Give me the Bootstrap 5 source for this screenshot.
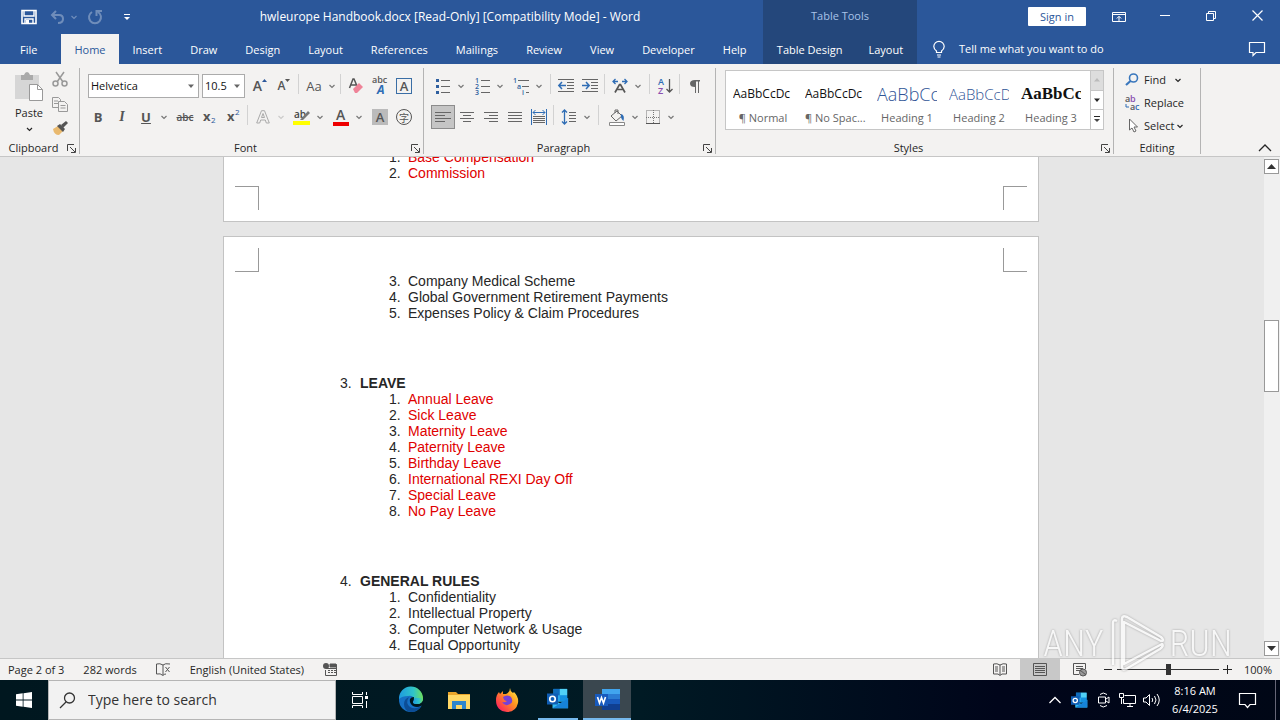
<!DOCTYPE html>
<html lang="en">
<head>
<meta charset="utf-8">
<meta name="viewport" content="width=device-width, initial-scale=1">
<title>hwleurope Handbook.docx - Word</title>
<link href="https://cdn.jsdelivr.net/npm/bootstrap@5.3.0/dist/css/bootstrap.min.css" rel="stylesheet">
<style>
:root{--word:#2b579a;--word-dark:#24477b;--ink:#262626;--line:#c6c6c6}
body{font-family:"Open Sans","Noto Sans",sans-serif;font-size:11px;line-height:16px;color:var(--ink);background:#e6e6e6}
svg{display:block;flex:none;overflow:visible}
svg:not([stroke]){stroke:currentColor}
svg:not([fill]){fill:none}
button,input{font:inherit;color:inherit}
button{background:none;border:0;padding:0}
a{color:inherit;text-decoration:none}
/* title bar and tabs */
.titlebar{background:var(--word);color:#fff;height:64px}
.title-row{height:34px}
.doc-title{font-size:12px;white-space:pre}
.tab-row{height:30px}
.tab-row a{padding:0 14px;height:30px;line-height:31px;white-space:nowrap}
.context .tab-row a{padding:0 13px}
.tab-row a.file{padding:0 24px 0 20px}
.tab-row a.current{background:#f3f2f1;color:var(--word);padding:0 13px}
.main-part{width:763px}
.quick{width:137px;padding-left:20px}
.context{width:154px;background:var(--word-dark)}
.context .title-row{color:#a9c3e8;line-height:32px}
.win{width:46px;height:32px}
.signin{background:#fff;color:var(--word);width:58px;height:19px;border-radius:1px;line-height:19px;margin:0 10px 2px 0}
.tell{padding-left:14px}
.dim{opacity:.32}
/* ribbon */
.ribbon{background:#f3f2f1;height:93px;border-bottom:1px solid var(--line)}
.group{margin:4px 0 2px;border-right:1px solid #b4b4b4}
.tools{padding-top:6px}
.tool-row{height:24px;margin-bottom:7px}
.cap{line-height:12px;height:12px}
.launch{width:12px;height:12px;color:#444}
.paste{width:44px;padding-left:14px!important;padding-top:2px!important}
.t{width:24px;height:24px;display:flex;align-items:center;justify-content:center;color:#555}
.t.on{background:#c5c5c5;outline:1px solid #8c8c8c;outline-offset:-1px}
.c{width:12px;height:24px;display:flex;align-items:center;justify-content:center;color:#777}
.s3{width:3px}
.vs{width:1px;height:20px;background:#d2d2d2;margin:0 3px 0 2px}
.combo{height:24px;border:1px solid #ababab;background:#fff;color:#111}
.combo input{border:0;background:none;padding:0 0 0 2px;width:100%;min-width:0;outline:0}
.combo button{width:14px;flex:none;display:flex;justify-content:center;align-items:center;color:#666}
.g-clip{width:80px}.g-font{width:344px}.g-para{width:292px}.g-style{width:398px}.g-edit{width:87px}
.w-name{width:111px}.w-size{width:43px}
.glyph{font-size:14px;line-height:20px}
.boxed{width:16px;height:16px;font-size:13px}
.gallery{height:60px;width:379px;background:#fff;border:1px solid var(--line);margin-left:9px}
.gallery .item{width:72px;padding:0 5px 0 7px;text-align:center;color:#666}
.gallery .sample{display:block;height:28px;line-height:28px;margin-top:8px;width:60px;overflow:hidden;white-space:nowrap;text-align:left;color:#111;font-size:12px}
.gallery .nm{display:block;white-space:nowrap;line-height:20px}
.gal-scroll{width:13px;border-left:1px solid var(--line)}
.gal-scroll button{flex:1;display:flex;align-items:center;justify-content:center;border-bottom:1px solid var(--line)}
.gal-scroll button:first-child{background:#ddd;color:#bbb}
.gal-scroll button:last-child{border-bottom:0}
.gallery .h1s{font-size:18px;color:#2f5496;font-weight:300}
.gallery .h2s{font-size:15px;color:#2f5496;font-weight:300}
.gallery .h3s{font-family:"Liberation Serif",serif;font-size:17px;font-weight:bold}
.edit-row{height:23px;display:flex;align-items:center;gap:4px;padding-left:11px}
/* document */
.canvas{overflow:hidden;min-height:0}
.page-area{padding-right:2px}
.sheet{width:816px;max-width:100%;margin:0 auto;background:#fff;border:1px solid #c3c3c3;font-family:"Liberation Sans",Arial,sans-serif;font-size:14px}
.sheet ol{list-style:none;margin:0;padding:0}
.sheet li li{display:flex}
.sheet .sub{padding-left:165px}
.num{display:inline-block;width:19px;flex:none}
.head-num{display:inline-block;width:20px}
.first-sheet{margin-top:-9px;padding-bottom:11px}
.marks{display:flex;justify-content:space-between;padding:0 11px}
.marks i{width:24px;height:24px;border:0 solid #999}
.marks.low{margin-top:5px}
.marks.low i{border-top-width:1px}
.marks.high{margin:11px 0 1px}
.marks.high i{border-bottom-width:1px}
.marks i:first-child{border-right-width:1px}
.marks i:last-child{border-left-width:1px}
.second-sheet{margin-top:14px;padding-bottom:200px}
.chapter{margin-top:54px;padding-left:116px}
.sheet .chapter .sub{padding-left:49px}
.redtext{color:#e00000}
.scroll{width:16px;background:#f0f0f0;padding:2px 0 2px}
.scroll button{width:15px;height:15px;background:#fff;border:1px solid #999;display:flex;align-items:center;justify-content:center}
.thumb{width:15px;height:72px;background:#fff;border:1px solid #999;margin-top:146px}
.logo-mark{position:absolute;right:48px;bottom:44px;color:#fff;opacity:.7;font-family:"Roboto Condensed","Liberation Sans Narrow","Roboto",sans-serif;font-weight:300;font-size:36px;line-height:64px;filter:drop-shadow(0 0 1px #888);pointer-events:none;gap:5px}
/* status bar */
.status{height:22px;background:#f3f2f1;border-top:1px solid var(--line);padding-left:8px}
.gap-a{margin-left:19px}
.status .view{width:40px;height:21px;display:flex;align-items:center;justify-content:center;color:#444}
.status .view.on{background:#c8c8c8}
.percent{width:40px;margin-right:8px}
.zoomer{appearance:none;width:102px;height:14px;background:linear-gradient(#333,#333) center/100% 1px no-repeat;margin:0}
.zoomer::-webkit-slider-thumb{appearance:none;width:5px;height:11px;background:#333}
/* taskbar */
.taskbar{height:40px;background:linear-gradient(90deg,#00171f 0,#001a24 50%,#00051a 78%,#000716 100%);color:#fff}
.start{width:48px}
.find{width:288px;height:40px;background:#f2f2f2;border:1px solid #b5b5b5;color:#333;padding:0 10px}
.find input{border:0;background:none;outline:0;font-size:14px;width:100%}
.find input::placeholder{color:#333;opacity:1}
.app{width:48px;height:40px;display:flex;align-items:center;justify-content:center}
.app.first{margin-right:3px}
.app.open{width:40px;margin:0 5px 0 7px;border-bottom:2px solid #76b9ed}
.app.now{background:#3a474f;border-bottom:2px solid #76b9ed}
.tray{width:24px;display:flex;justify-content:center}
.clock{width:64px;line-height:18px;text-align:center;margin-right:8px}
.edge-bar{width:1px;height:40px;background:#667;margin-right:4px}
</style>
</head>
<body class="vh-100 d-flex flex-column overflow-hidden">
<svg width="0" height="0" class="position-absolute" aria-hidden="true">
<symbol id="cv" viewBox="0 0 8 8"><path d="M1.500 3l2.500 2.500L6.500 3" stroke-width="1.200"/></symbol>
<symbol id="tri" viewBox="0 0 8 8"><path d="M1 2.500h6L4 6z" fill="currentColor" stroke="none"/></symbol>
<symbol id="dl" viewBox="0 0 9 9"><path d="M.5 7V.5H7M3 3l5 5M8.500 4v4.500H4"/></symbol>
<symbol id="outlook" viewBox="0 0 24 24"><g stroke="none"><path d="M7 1h15v14H7z" fill="#28a8ea"/><path d="M7 1h7v7H7z" fill="#0f6cbd"/><path d="M14 1h8v7h-8z" fill="#50d0f5"/><path d="M14 8h8v6h-8z" fill="#1490df"/><path d="M6 13l9 4 8-6v11H6z" fill="#32bdf0"/><path d="M6 22l17-11v11z" fill="#1683d8"/><path d="M0 6h12v12H0z" fill="#0f5db4"/></g><circle cx="6" cy="12" r="3" stroke="#fff" stroke-width="1.800"/></symbol>
</svg>

<header class="titlebar d-flex flex-shrink-0">
  <div class="main-part">
    <div class="title-row d-flex align-items-center">
      <div class="quick d-flex align-items-center">
        <button aria-label="Save"><svg width="18" height="16" viewBox="0 0 18 16"><path d="M2 1.500h14v13H2z" stroke-width="1.600"/><path d="M4 2v5h10V2M5 14v-4h8v4" stroke-width="1.400"/><path d="M6 11h3v3H6z" fill="#fff" stroke="none"/></svg></button>
        <button class="dim ms-2 ps-1" aria-label="Undo"><svg width="15" height="14" viewBox="0 0 15 14" stroke-width="2"><path d="M6 1L2 5l4 4M2 5h7q4 0 4 4t-5 4"/></svg></button>
        <button class="dim ms-1" aria-label="Undo list"><svg width="10" height="8"><use href="#cv"/></svg></button>
        <button class="dim ms-2" aria-label="Repeat"><svg width="16" height="16" viewBox="0 0 16 16" stroke-width="2"><path d="M5 3a6 6 0 1 0 6 0M9.500 7V2H15"/></svg></button>
        <button class="ms-3 ps-1" aria-label="Customize"><svg width="8" height="8" viewBox="0 0 8 8"><path d="M1 1.500h6"/><path d="M1 4h6L4 7z" fill="#fff" stroke="none"/></svg></button>
      </div>
      <div class="doc-title flex-grow-1 text-center">hwleurope Handbook.docx [Read-Only] [Compatibility Mode] - Word</div>
    </div>
    <nav class="tab-row d-flex">
      <a href="#" class="file">File</a><a href="#" class="current">Home</a><a href="#">Insert</a><a href="#">Draw</a><a href="#">Design</a><a href="#">Layout</a><a href="#">References</a><a href="#">Mailings</a><a href="#">Review</a><a href="#">View</a><a href="#">Developer</a><a href="#">Help</a>
    </nav>
  </div>
  <div class="context">
    <div class="title-row text-center">Table Tools</div>
    <nav class="tab-row d-flex justify-content-center"><a href="#" class="ps-2">Table Design</a><a href="#" class="pe-2">Layout</a></nav>
  </div>
  <div class="flex-grow-1">
    <div class="title-row d-flex justify-content-end align-items-center">
      <button class="signin">Sign in</button>
      <button class="win d-flex justify-content-center align-items-center" aria-label="Ribbon options"><svg width="14" height="12" viewBox="0 0 14 12"><path d="M.5 1.500h13v9H.5zM.5 3.500h13M7 10V5.500M4.800 7.500L7 5.300l2.200 2.200"/></svg></button>
      <button class="win d-flex justify-content-center align-items-center" aria-label="Minimize"><svg width="10" height="10"><path d="M0 3.500h10"/></svg></button>
      <button class="win d-flex justify-content-center align-items-center" aria-label="Restore"><svg width="11" height="13"><path d="M.5 2.500h7v7h-7zM2.500 2.500v-2h7v7h-2"/></svg></button>
      <button class="win d-flex justify-content-center align-items-center" aria-label="Close"><svg width="11" height="14"><path d="M.5.5l10 10M10.500.5l-10 10" stroke-width="1.200"/></svg></button>
    </div>
    <div class="tab-row d-flex align-items-center ps-3">
      <svg width="12" height="17" viewBox="0 0 12 17"><path d="M3.500 11.500V10Q.8 8 .8 5.600a5.200 5.200 0 0 1 10.400 0Q11.200 8 8.500 10v1.500zM4 14h4M4.500 16h3" stroke-width="1.200"/></svg>
      <button class="tell flex-grow-1 text-start">Tell me what you want to do</button>
      <button class="win d-flex justify-content-center align-items-center" aria-label="Comments"><svg width="16" height="15"><path d="M.5.500h15v10H7l-3 3v-3H.5z" stroke-width="1.200"/></svg></button>
    </div>
  </div>
</header>

<section class="ribbon d-flex flex-shrink-0">
  <div class="group g-clip d-flex flex-column">
    <div class="d-flex flex-grow-1">
      <button class="paste d-flex flex-column align-items-center" aria-label="Paste">
        <svg width="28" height="31" viewBox="0 0 28 31"><g stroke="none"><path d="M0 5h24v24H0z" fill="#d6d6d6"/><path d="M6 5h3q1-3 3-3t3 3h3v5H6z" fill="#aaa"/><path d="M14.500 14.500h8l5 5v11h-13z" fill="#fff" stroke="#999"/><path d="M22.500 14.500v5h5" stroke="#999"/></g></svg>
        <span class="mt-1">Paste</span><svg class="mt-1" width="9" height="8"><use href="#cv"/></svg>
      </button>
      <div class="d-flex flex-column ms-1">
        <button class="t" aria-label="Cut"><svg width="16" height="16" stroke="#999" stroke-width="1.500"><path d="M4 0l7 10M12 0L5 10"/><circle cx="3.500" cy="11.500" r="2.500"/><circle cx="12.500" cy="11.500" r="2.500"/></svg></button>
        <button class="t" aria-label="Copy"><svg width="16" height="15" stroke="#999"><path d="M.5.500h6l2 2v8h-8zM2 4h4M2 6.500h4"/><path d="M6.500 4.500h6l3 3v7h-9z" fill="#f3f2f1"/><path d="M8.500 8.500h5M8.500 11h5"/></svg></button>
        <button class="t" aria-label="Format Painter"><svg width="16" height="15" stroke="none"><path d="M1 8l5-3 5 5-4 4q-5 0-6-6z" fill="#e9b96e"/><path d="M5 5l3-2 5 5-2 3z" fill="#555"/><path d="M9 4l5-4 2 2-5 5z" fill="#555"/></svg></button>
      </div>
    </div>
    <div class="cap d-flex"><span class="flex-grow-1 text-center">Clipboard</span><button class="launch" aria-label="Clipboard settings"><svg width="9" height="9"><use href="#dl"/></svg></button></div>
  </div>

  <div class="group g-font d-flex flex-column">
    <div class="tools flex-grow-1">
      <div class="tool-row d-flex ps-2">
        <div class="combo w-name d-flex"><input aria-label="Font" value="Helvetica"><button aria-label="Fonts"><svg width="8" height="8"><use href="#tri"/></svg></button></div><span class="s3"></span>
        <div class="combo w-size d-flex"><input aria-label="Font size" value="10.5"><button aria-label="Sizes"><svg width="8" height="8"><use href="#tri"/></svg></button></div><span class="s3"></span>
        <button class="t fw-semibold" aria-label="Grow font"><span class="glyph">A</span><svg width="5" height="16"><path d="M0 4l2.500-3L5 4z" fill="#2b579a" stroke="none"/></svg></button>
        <button class="t fw-semibold" aria-label="Shrink font"><span style="font-size:12px">A</span><svg width="5" height="16"><path d="M0 1h5L2.500 4z" fill="#555" stroke="none"/></svg></button>
        <span class="vs"></span>
        <button class="t" aria-label="Change case"><span style="font-size:13px">Aa</span></button><button class="c" aria-label="Case list"><svg width="8" height="8"><use href="#cv"/></svg></button>
        <span class="vs"></span>
        <button class="t" aria-label="Clear formatting"><svg width="16" height="16"><path d="M1.500 10l3.500-9h1l3 7M3 7h5" stroke="#555" stroke-width="1.500"/><path d="M5 11l6-6 4 4-6 6H7z" fill="#ef8398" stroke="none"/></svg></button>
        <button class="t flex-column" aria-label="Phonetic guide"><svg width="16" height="18"><g stroke="none"><text x="0" y="6" font-size="9" font-weight="600" fill="#555">abc</text><text x="5" y="17" font-size="12" font-weight="700" font-style="italic" fill="#2f6db5">A</text></g></svg></button>
        <button class="t" aria-label="Character border"><span class="boxed d-flex justify-content-center align-items-center fw-semibold" style="border:1px solid #3a6ea5">A</span></button>
      </div>
      <div class="tool-row d-flex" style="padding-left:6px">
        <button class="t fw-bold" style="font-size:13px">B</button><button class="t" style="font:italic bold 14px 'Liberation Serif',serif">I</button><button class="t fw-bold text-decoration-underline" style="font-size:13px">U</button><button class="c" aria-label="Underline list"><svg width="8" height="8"><use href="#cv"/></svg></button><span class="s3"></span>
        <button class="t text-decoration-line-through fw-semibold" style="font-size:10px">abc</button>
        <button class="t" aria-label="Subscript"><svg width="13" height="16" stroke="none"><text x="0" y="12" font-size="13" font-weight="700" fill="#555">x</text><text x="8" y="14" font-size="8" fill="#2b579a">2</text></svg></button>
        <button class="t" aria-label="Superscript"><svg width="13" height="16" stroke="none"><text x="0" y="12" font-size="13" font-weight="700" fill="#555">x</text><text x="8" y="6" font-size="8" fill="#2b579a">2</text></svg></button>
        <span class="vs"></span>
        <button class="t" aria-label="Text effects"><svg width="14" height="14" stroke="#aaa"><path d="M.7 13L5.500.700h3L13.300 13h-3l-1-3H4.700l-1 3zM5.500 7.500h3L7 3.500z"/></svg></button><button class="c dim" aria-label="Effects list"><svg width="8" height="8"><use href="#cv"/></svg></button><span class="s3"></span>
        <button class="t" aria-label="Highlight"><svg width="18" height="18"><text x="1" y="10" font-size="10" font-weight="600" fill="#444" stroke="none">ab</text><path d="M7 12l8-9 2 2-7 7z" fill="#777" stroke="none"/><path d="M0 13h17v4H0z" fill="#ff0" stroke="none"/></svg></button><button class="c" aria-label="Highlight list"><svg width="8" height="8"><use href="#cv"/></svg></button><span class="s3"></span>
        <button class="t" aria-label="Font color"><svg width="16" height="18"><text x="3" y="12" font-size="14" font-weight="600" fill="#555" stroke="none">A</text><path d="M0 14h16v4H0z" fill="#e00" stroke="none"/></svg></button><button class="c" aria-label="Color list"><svg width="8" height="8"><use href="#cv"/></svg></button><span class="s3"></span>
        <button class="t" aria-label="Shading"><span class="boxed d-flex justify-content-center align-items-center fw-semibold" style="background:#bbb">A</span></button>
        <button class="t" aria-label="Enclose character"><span class="boxed d-flex justify-content-center align-items-center rounded-circle" style="border:1px solid #555;font:10px 'Noto Sans CJK SC',sans-serif">字</span></button>
      </div>
    </div>
    <div class="cap d-flex"><span class="flex-grow-1 text-center">Font</span><button class="launch" aria-label="Font settings"><svg width="9" height="9"><use href="#dl"/></svg></button></div>
  </div>

  <div class="group g-para d-flex flex-column">
    <div class="tools flex-grow-1">
      <div class="tool-row d-flex" style="padding-left:7px">
        <button class="t" aria-label="Bullets"><svg width="14" height="16"><path d="M5 2.500h9M5 8.500h9M5 14.500h9" stroke="#666"/><path d="M0 1h3v3H0zM0 7h3v3H0zM0 13h3v3H0z" fill="#2f5f9f" stroke="none"/></svg></button><button class="c" aria-label="Bullet list"><svg width="8" height="8"><use href="#cv"/></svg></button><span class="s3"></span>
        <button class="t" aria-label="Numbering"><svg width="15" height="17"><path d="M6 2.500h9M6 8.500h9M6 14.500h9" stroke="#666"/><g fill="#2f5f9f" stroke="none" font-size="7" font-weight="600"><text y="5">1</text><text y="11">2</text><text y="17">3</text></g></svg></button><button class="c" aria-label="Number list"><svg width="8" height="8"><use href="#cv"/></svg></button><span class="s3"></span>
        <button class="t" aria-label="Multilevel list"><svg width="17" height="17"><path d="M5 2.500h11M9 8.500h7M13 14.500h3" stroke="#666"/><g fill="#2f5f9f" stroke="none" font-size="7" font-weight="600"><text y="5">1</text><text x="4" y="11">a</text><text x="9" y="17">i</text></g></svg></button><button class="c" aria-label="Level list"><svg width="8" height="8"><use href="#cv"/></svg></button><span class="s3"></span>
        <span class="vs"></span>
        <button class="t" aria-label="Decrease indent"><svg width="16" height="14"><path d="M0 .5h16M9 3.500h7M9 6.500h7M9 9.500h7M0 12.500h16" stroke="#666"/><path d="M8 6.500H1M4 3L.8 6.500 4 10" stroke="#2f6db5" stroke-width="1.500"/></svg></button>
        <button class="t" aria-label="Increase indent"><svg width="16" height="14"><path d="M0 .5h16M9 3.500h7M9 6.500h7M9 9.500h7M0 12.500h16" stroke="#666"/><path d="M0 6.500h7M4 3l3.200 3.500L4 10" stroke="#2f6db5" stroke-width="1.500"/></svg></button>
        <span class="vs"></span>
        <button class="t" aria-label="Asian layout"><svg width="16" height="14"><path d="M3 13.500l4.500-8h1l4.500 8M5 10.500h6" stroke="#555" stroke-width="1.700"/><path d="M3.500 0L1 2.500 3.500 5M1 2.500h5M12.500 0L15 2.500 12.500 5M15 2.500h-5" stroke="#2f6db5" stroke-width="1.300"/></svg></button><button class="c" aria-label="Asian list"><svg width="8" height="8"><use href="#cv"/></svg></button>
        <span class="s3"></span><span class="vs"></span>
        <button class="t" aria-label="Sort"><svg width="15" height="16"><g stroke="none" font-size="9" font-weight="600"><text y="7" fill="#2f6db5">A</text><text y="16" fill="#8a4fb0">Z</text></g><path d="M11.500 1v13M8.500 11l3 3 3-3" stroke="#555" stroke-width="1.300"/></svg></button>
        <span class="vs"></span>
        <button class="t" aria-label="Show marks"><svg width="10" height="13"><path d="M5 0h5v1.500H9V13H8V1.500H6V13H5V7Q0 7 0 3.500T5 0z" fill="#666" stroke="none"/></svg></button>
      </div>
      <div class="tool-row d-flex" style="padding-left:7px">
        <button class="t on" aria-label="Align left"><svg width="16" height="13" stroke="#666"><path d="M0 1.500h16M0 4.500h10M0 7.500h16M0 10.500h10"/></svg></button>
        <button class="t" aria-label="Center"><svg width="14" height="13" stroke="#666"><path d="M0 1.500h14M3 4.500h8M0 7.500h14M3 10.500h8"/></svg></button>
        <button class="t" aria-label="Align right"><svg width="14" height="13" stroke="#666"><path d="M0 1.500h14M5 4.500h9M0 7.500h14M5 10.500h9"/></svg></button>
        <button class="t" aria-label="Justify"><svg width="14" height="13" stroke="#666"><path d="M0 1.500h14M0 4.500h14M0 7.500h14M0 10.500h14"/></svg></button>
        <button class="t" aria-label="Distribute"><svg width="16" height="16"><path d="M.5 0v16M15.500 0v16M2 3.500h12M4.500 1L2 3.500 4.500 6M11.500 1L14 3.500 11.500 6" stroke="#2f6db5"/><path d="M2 7.500h12M2 9.500h12M2 11.500h12M2 13.500h12" stroke="#666"/></svg></button>
        <span class="vs"></span>
        <button class="t" aria-label="Line spacing"><svg width="14" height="16"><path d="M2.500 1v14M0 3.500L2.500 1 5 3.500M0 12.500L2.500 15 5 12.500" stroke="#2f6db5" stroke-width="1.300"/><path d="M7 3.500h7M7 6.500h7M7 9.500h7M7 12.500h7" stroke="#666"/></svg></button><button class="c" aria-label="Spacing list"><svg width="8" height="8"><use href="#cv"/></svg></button>
        <span class="s3"></span><span class="vs"></span><span class="s3"></span>
        <button class="t" aria-label="Fill"><svg width="16" height="17"><path d="M2 7l6-5 5 5-6 5zM6 4V1h3v4" stroke="#666"/><path d="M12 5q4 1 2.500 7Q11 9 12 5z" fill="#2f6db5" stroke="none"/><path d="M.5 13.500h15v3H.5z" fill="#fff" stroke="#888"/></svg></button><button class="c" aria-label="Fill list"><svg width="8" height="8"><use href="#cv"/></svg></button>
        <button class="t" aria-label="Borders"><svg width="14" height="14"><path d="M.5.5h13v13H.500zM7.500 0v14M0 7.500h14" stroke="#777" stroke-dasharray="1 1"/><path d="M0 13.500h14" stroke="#555"/></svg></button><button class="c" aria-label="Border list"><svg width="8" height="8"><use href="#cv"/></svg></button>
      </div>
    </div>
    <div class="cap d-flex"><span class="flex-grow-1 text-center">Paragraph</span><button class="launch" aria-label="Paragraph settings"><svg width="9" height="9"><use href="#dl"/></svg></button></div>
  </div>

  <div class="group g-style d-flex flex-column">
    <div class="flex-grow-1 pt-1" style="margin-top:-2px">
      <div class="gallery d-flex">
        <div class="d-flex flex-grow-1">
          <button class="item"><span class="sample">AaBbCcDc</span><span class="nm">¶ Normal</span></button>
          <button class="item"><span class="sample">AaBbCcDc</span><span class="nm">¶ No Spac...</span></button>
          <button class="item"><span class="sample h1s">AaBbCc</span><span class="nm">Heading 1</span></button>
          <button class="item"><span class="sample h2s">AaBbCcD</span><span class="nm">Heading 2</span></button>
          <button class="item"><span class="sample h3s">AaBbCc</span><span class="nm">Heading 3</span></button>
        </div>
        <div class="gal-scroll d-flex flex-column">
          <button aria-label="Previous styles"><svg width="8" height="8" viewBox="0 0 8 8"><path d="M1 5.500h6L4 2z" fill="currentColor" stroke="none"/></svg></button>
          <button aria-label="Next styles"><svg width="8" height="8"><use href="#tri"/></svg></button>
          <button aria-label="All styles"><svg width="8" height="9"><path d="M1 1.500h6"/><path d="M1 4h6L4 7z" fill="#444" stroke="none"/></svg></button>
        </div>
      </div>
    </div>
    <div class="cap d-flex"><span class="flex-grow-1 text-center">Styles</span><button class="launch" aria-label="Style settings"><svg width="9" height="9"><use href="#dl"/></svg></button></div>
  </div>

  <div class="group g-edit d-flex flex-column">
    <div class="flex-grow-1">
      <button class="edit-row"><svg width="15" height="13"><circle cx="8.500" cy="5" r="4" stroke="#3a77bd" stroke-width="1.600"/><path d="M5.500 8L1 12" stroke="#3a77bd" stroke-width="2.200"/></svg>Find<svg class="ms-1" width="8" height="8"><use href="#cv"/></svg></button>
      <button class="edit-row"><svg width="15" height="16"><g stroke="none" font-size="9" font-weight="600"><text y="7" fill="#555">a</text><text x="5" y="7" fill="#8a4fb0">b</text><text x="5" y="15" fill="#555">a</text><text x="10" y="15" fill="#2f6db5">c</text></g><path d="M1 9v3h3" stroke="#2f6db5"/></svg>Replace</button>
      <button class="edit-row"><svg width="15" height="15"><path d="M4.500 1v11l2.500-2 2 4 2-1-2-4h3.500z" fill="#fff" stroke="#666"/></svg>Select<svg style="margin-left:-2px" width="8" height="8"><use href="#cv"/></svg></button>
    </div>
    <div class="cap text-center">Editing</div>
  </div>
  <button class="ms-auto align-self-end me-2 mb-1" aria-label="Collapse ribbon"><svg width="14" height="8"><path d="M1 7l6-6 6 6" stroke-width="1.300"/></svg></button>
</section>

<main class="d-flex flex-grow-1 canvas">
  <div class="page-area flex-grow-1 overflow-hidden">
    <article class="sheet first-sheet">
      <ol class="sub"><li class="d-flex"><span class="num">1.</span><span class="redtext">Base Compensation</span></li><li class="d-flex"><span class="num">2.</span><span class="redtext">Commission</span></li></ol>
      <div class="marks low"><i></i><i></i></div>
    </article>
    <article class="sheet second-sheet">
      <div class="marks high"><i></i><i></i></div>
      <ol class="sub"><li class="d-flex"><span class="num">3.</span>Company Medical Scheme</li><li class="d-flex"><span class="num">4.</span>Global Government Retirement Payments</li><li class="d-flex"><span class="num">5.</span>Expenses Policy &amp; Claim Procedures</li></ol>
      <ol>
        <li class="chapter"><span class="head-num">3.</span><b>LEAVE</b>
          <ol class="sub">
            <li><span class="num">1.</span><span class="redtext">Annual Leave</span></li>
            <li><span class="num">2.</span><span class="redtext">Sick Leave</span></li>
            <li><span class="num">3.</span><span class="redtext">Maternity Leave</span></li>
            <li><span class="num">4.</span><span class="redtext">Paternity Leave</span></li>
            <li><span class="num">5.</span><span class="redtext">Birthday Leave</span></li>
            <li><span class="num">6.</span><span class="redtext">International REXI Day Off</span></li>
            <li><span class="num">7.</span><span class="redtext">Special Leave</span></li>
            <li><span class="num">8.</span><span class="redtext">No Pay Leave</span></li>
          </ol></li>
        <li class="chapter"><span class="head-num">4.</span><b>GENERAL RULES</b>
          <ol class="sub">
            <li><span class="num">1.</span>Confidentiality</li>
            <li><span class="num">2.</span>Intellectual Property</li>
            <li><span class="num">3.</span>Computer Network &amp; Usage</li>
            <li><span class="num">4.</span>Equal Opportunity</li>
          </ol></li>
      </ol>
    </article>
  </div>
  <div class="scroll d-flex flex-column">
    <button aria-label="Scroll up"><svg width="9" height="6"><path d="M0 5h9L4.500 0z" fill="#333" stroke="none"/></svg></button>
    <div class="thumb"></div>
    <button class="mt-auto" aria-label="Scroll down"><svg width="9" height="6"><path d="M0 0h9L4.500 5z" fill="#333" stroke="none"/></svg></button>
  </div>
</main>

<footer class="status d-flex align-items-center flex-shrink-0">
  <span>Page 2 of 3</span><span class="gap-a">282 words</span>
  <svg class="gap-a" width="15" height="13" stroke="#555"><path d="M7 2v10M7 2Q4 0 .5 1v10q4-1 6.500 1.500 1-1.500 3-1.500M7 2q2-2 7-1M9.500 4l4 5M13.500 4l-4 5"/></svg>
  <span class="gap-a">English (United States)</span>
  <svg class="gap-a" width="14" height="14" stroke="#555"><circle cx="3" cy="3" r="3" fill="#555" stroke="none"/><path d="M7 1.500h6.500v11h-11V7M3 5.500h10M5 7.500h2M8 7.500h2M11 7.500h2M5 9.500h2M8 9.500h2M11 9.500h2"/><path d="M7 1h6v3H7z" fill="#555"/></svg>
  <div class="ms-auto d-flex align-items-center">
    <button class="view" aria-label="Read mode"><svg width="14" height="13" stroke="#555"><path d="M7 2v10M7 2Q4 0 .5 1v10H5l2 1.500L9 11h4.500V1Q10 0 7 2M2 4h3M2 6h3M2 8h3M9 4h3M9 6h3M9 8h3"/></svg></button>
    <button class="view on" aria-label="Print layout"><svg width="14" height="13" stroke="#555"><path d="M.5.500h13v12H.5zM2 3.500h10M2 5.500h10M2 7.500h10M2 9.500h10"/></svg></button>
    <button class="view" aria-label="Web layout"><svg width="15" height="14" stroke="#555"><path d="M12.500 6V.5H.5v11H6M3 3.500h7M3 5.500h7M3 7.500h4"/><circle cx="10" cy="9.500" r="3.500" fill="#999"/><path d="M7 7l6 5"/></svg></button>
    <button aria-label="Zoom out"><svg class="ms-1" width="9" height="9"><path d="M0 4.500h8"/></svg></button>
    <input type="range" class="zoomer ms-1" aria-label="Zoom" min="0" max="100" value="50">
    <button class="ms-1" aria-label="Zoom in"><svg width="9" height="9"><path d="M0 4.500h9M4.500 0v9"/></svg></button>
    <span class="percent text-end">100%</span>
  </div>
</footer>

<footer class="taskbar d-flex align-items-center flex-shrink-0">
  <button class="start d-flex justify-content-center" aria-label="Start"><svg width="16" height="16"><path d="M0 2.300L6.700 1.300v6.300H0zM7.500 1.200L16 0v7.600H7.500zM0 8.400h6.700v6.300L0 13.700zM7.500 8.400H16V16l-8.500-1.200z" fill="#fff" stroke="none"/></svg></button>
  <label class="find d-flex align-items-center"><svg width="17" height="17"><circle cx="10.500" cy="6" r="5" stroke-width="1.300"/><path d="M7 10l-6 6" stroke-width="1.300"/></svg><input class="ms-2 ps-1" aria-label="Search" placeholder="Type here to search"></label>
  <button class="app first" aria-label="Task view"><svg width="16" height="16"><path d="M.5 0v2.500h10V0M.5 4.500h10v7H.5zM.5 16v-2.500h10V16M14.500 0v3M14.500 9v7"/><path d="M13 4h3v3h-3z" fill="#fff" stroke="none"/></svg></button>
  <button class="app" aria-label="Edge"><svg width="24" height="24" viewBox="0 0 24 24" stroke="none"><defs><linearGradient id="e1"><stop stop-color="#1e9be0"/><stop offset=".6" stop-color="#2fc4c9"/><stop offset="1" stop-color="#6fe05a"/></linearGradient></defs><circle cx="12" cy="12" r="12" fill="#1670c5"/><path d="M0 11A12 12 0 0 1 24 10q0 6-6 6-4 0-4-2 2-1 1-4-2-3-6-2-6 0-9 3z" fill="url(#e1)"/><path d="M14 14q0 2 4 2 4 0 6-4v5l-2 1q-4 2-8 0-4-3-3-7 1-2 4-2 0 3-1 5z" fill="#00171f"/><path d="M24 10q0 6-6 6-4 0-4-2l2-4z" fill="url(#e1)"/><path d="M10 9q-4 6 1 10 5 3 11-1-3 6-10 6-7-1-7-8 0-5 5-7z" fill="#0c4d96"/></svg></button>
  <button class="app" aria-label="File Explorer"><svg width="22" height="19"><path d="M0 1h8l2 2h12v15H0z" fill="#e9a52b" stroke="none"/><path d="M0 4h22v14H0z" fill="#ffd866" stroke="none"/><path d="M4 10h14v8h-4v-4H8v4H4z" fill="#2f86cc" stroke="none"/></svg></button>
  <button class="app" aria-label="Firefox"><svg width="24" height="24" viewBox="0 0 24 24"><defs><linearGradient id="f1" x1="1" x2="0" y2="1"><stop stop-color="#fff44f"/><stop offset=".4" stop-color="#ff9a1f"/><stop offset=".8" stop-color="#ff3750"/><stop offset="1" stop-color="#e31587"/></linearGradient></defs><path d="M15 0q0 3 3 5l1-1q5 5 4 11-2 9-11 9Q1 23 1 12q0-5 3-8l1 2 3-3v3h3q4-2 4-6z" fill="url(#f1)" stroke="none"/><path d="M8 9q4-3 8 0 3 5-1 7-5 3-8-2 3 1 5-1-3 0-4-4z" fill="#7840d6" stroke="none"/></svg></button>
  <button class="app open" aria-label="Outlook"><svg width="24" height="22"><use href="#outlook"/></svg></button>
  <button class="app now" aria-label="Word"><svg width="25" height="21"><g stroke="none"><path d="M7 0h18v5H7z" fill="#41a5ee"/><path d="M7 5h18v5H7z" fill="#2b7cd3"/><path d="M7 10h18v5H7z" fill="#185abd"/><path d="M7 15h18v6H7z" fill="#103f91"/><path d="M0 5h13v12H0z" fill="#185abd"/></g><path d="M2.500 8l2 6 2-5.500 2 5.500 2-6" stroke="#fff" stroke-width="1.600"/></svg></button>
  <div class="ms-auto d-flex align-items-center">
    <button class="tray" aria-label="Hidden icons"><svg width="12" height="8"><path d="M.5 7L6 1.500 11.500 7" stroke-width="1.300"/></svg></button>
    <button class="tray" aria-label="Outlook tray"><svg width="17" height="17"><use href="#outlook"/></svg></button>
    <button class="tray" aria-label="Camera"><svg width="13" height="16"><path d="M1.500 5h7v6h-7zM9 7l3-2v6L9 9M3 2.500q3-3 7 0M3 13.500q3 3 7 0"/></svg></button>
    <button class="tray" aria-label="Network"><svg width="17" height="15"><path d="M5.500 2.500h11v8H4.500V6M8 13.500h6M11 11v2.500M.5.500h4v4h-4zM2.500 5v6"/></svg></button>
    <button class="tray" aria-label="Volume"><svg width="17" height="14"><path d="M.5 5h2.500l3.500-3.500v11L3 9H.500zM9 5q1.500 2 0 4M11.500 3q3 4 0 8M14 1q4.500 6 0 12"/></svg></button>
    <div class="clock">8:16 AM<br>6/4/2025</div>
    <button class="tray me-3" aria-label="Notifications"><svg width="17" height="17"><path d="M.5 1.500h16v11H11l-2.500 3-2.500-3H.5z" stroke-width="1.200"/></svg></button>
    <span class="edge-bar"></span>
  </div>
</footer>

<div class="logo-mark d-flex align-items-center" aria-hidden="true"><span>ANY</span><svg width="56" height="62" viewBox="0 0 56 62" stroke-width="2.500"><path d="M5 52V10q0-4 4-2M14 6q0-4 5-2l34 20q4 4 0 4L16 9v42l38-20q2 2-2 5L18 56q-4 2-4-3z" stroke-linejoin="round"/></svg><span>RUN</span></div>
<script src="https://cdn.jsdelivr.net/npm/bootstrap@5.3.0/dist/js/bootstrap.bundle.min.js"></script>
</body>
</html>
